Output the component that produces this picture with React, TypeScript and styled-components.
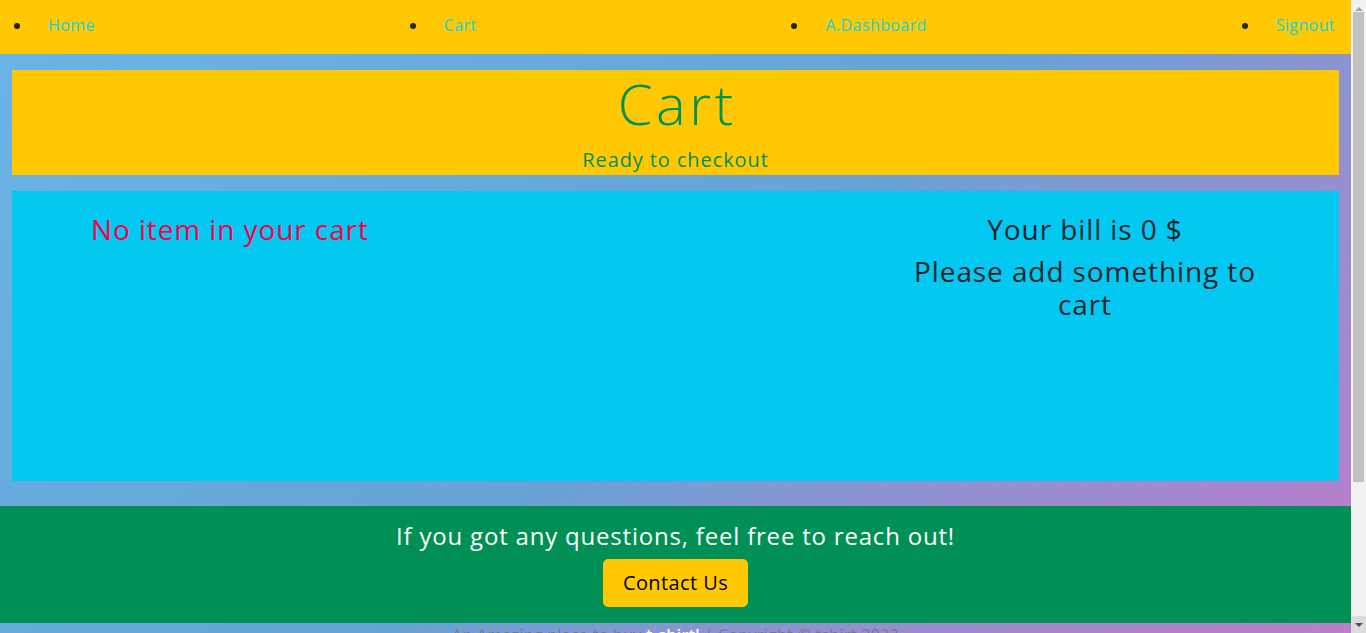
import React from "react";
import styled, { createGlobalStyle } from "styled-components";

const Global = createGlobalStyle`
  html, body { margin: 0; padding: 0; }
  body {
    font-family: "Open Sans", "Noto Sans", sans-serif;
    color: #212529;
    padding-right: 15px;
  }
  * { box-sizing: border-box; }
`;

const Page = styled.div`
  min-height: 800px;
  display: flex;
  flex-direction: column;
  background: linear-gradient(
    138deg,
    #6cb4e8 0%,
    #66aadc 30%,
    #67a3d6 48%,
    #8597d2 60%,
    #9a8ccf 72%,
    #b381cc 84%,
    #c779c8 100%
  );
`;

/* imitation of the browser's vertical scrollbar seen in the screenshot */
const ScrollTrack = styled.div`
  position: fixed;
  top: 0;
  right: 0;
  width: 15px;
  height: 100vh;
  background: #f1f1f1;
  display: flex;
  flex-direction: column;
  align-items: center;
`;

const ScrollArrow = styled.div<{ $down?: boolean }>`
  width: 15px;
  height: 17px;
  flex: none;
  display: flex;
  align-items: center;
  justify-content: center;
  background: ${(p) => (p.$down ? "#dcdcdc" : "#f1f1f1")};
  &::before {
    content: "";
    border-left: 4px solid transparent;
    border-right: 4px solid transparent;
    ${(p) =>
      p.$down
        ? "border-top: 4px solid #505050;"
        : "border-bottom: 4px solid #a3a3a3;"}
  }
`;

const ScrollThumb = styled.div`
  width: 11px;
  height: 470px;
  flex: none;
  background: #c1c1c1;
  margin-top: -5px;
`;

const ScrollSpacer = styled.div`
  flex: 1;
`;

const NavList = styled.ul`
  display: flex;
  justify-content: space-between;
  align-items: center;
  height: 54px;
  margin: 0;
  padding: 0 0 4px 32px;
  background: #ffc800;
  list-style: disc outside;
`;

const NavItem = styled.li`
  color: #212529;
  font-size: 16px;
`;

const NavLink = styled.a`
  display: block;
  padding: 8px 16px;
  font-size: 16px;
  line-height: 24px;
  color: #14d3e2;
  text-decoration: none;
  letter-spacing: 0.4px;
`;

const Main = styled.main`
  display: flex;
  flex-direction: column;
  gap: 16px;
  padding: 16px 12px 25px;
`;

const Hero = styled.section`
  height: 105px;
  background: #ffc800;
  text-align: center;
  color: #009157;
`;

const HeroTitle = styled.h1`
  margin: 0 0 8px;
  font-size: 56px;
  font-weight: 300;
  line-height: 1.2;
  letter-spacing: 3.5px;
  text-indent: 3.5px;
`;

const HeroLead = styled.p`
  margin: 0;
  font-size: 20px;
  line-height: 1.5;
  letter-spacing: 0.9px;
`;

const CartPanel = styled.section`
  display: grid;
  grid-template-columns: 1fr 380px;
  align-items: start;
  height: 290px;
  padding: 22px 64px 0 79px;
  background: #02c8f2;
`;

const Column = styled.div<{ $center?: boolean }>`
  text-align: ${(p) => (p.$center ? "center" : "left")};
`;

const Heading = styled.h3<{ $tone?: "danger" | "dark" }>`
  margin: 0 0 8px;
  font-size: 28px;
  font-weight: 400;
  line-height: 1.2;
  letter-spacing: 0.9px;
  color: ${(p) => (p.$tone === "danger" ? "#f7004a" : "#212529")};
`;

const Footer = styled.footer`
  display: flex;
  flex-direction: column;
  align-items: center;
`;

const ContactBand = styled.div`
  width: 100%;
  padding: 16px 0 16px;
  background: #009055;
  display: flex;
  flex-direction: column;
  align-items: center;
`;

const ContactText = styled.h4`
  margin: 0 0 8px;
  font-size: 24px;
  font-weight: 400;
  line-height: 1.2;
  color: #ffffff;
  letter-spacing: 0.8px;
`;

const ContactButton = styled.button`
  width: 145px;
  height: 48px;
  padding: 8px 16px;
  border: 1px solid #ffc800;
  border-radius: 5px;
  background: #ffc800;
  color: #000;
  font-family: inherit;
  font-size: 20px;
  line-height: 1.5;
  letter-spacing: 0.4px;
  cursor: pointer;
`;

const Copyright = styled.p`
  margin: 0;
  padding-top: 2px;
  font-size: 16px;
  line-height: 20px;
  color: #6f7d8c;
  text-align: center;
  letter-spacing: 0.3px;
`;

const Accent = styled.span`
  color: #ffffff;
  font-weight: 600;
`;

export default function App() {
  const links = ["Home", "Cart", "A.Dashboard", "Signout"];
  return (
    <>
      <Global />
      <Page>
        <nav>
          <NavList>
            {links.map((l) => (
              <NavItem key={l}>
                <NavLink href="#">{l}</NavLink>
              </NavItem>
            ))}
          </NavList>
        </nav>
        <Main>
          <Hero>
            <HeroTitle>Cart</HeroTitle>
            <HeroLead>Ready to checkout</HeroLead>
          </Hero>
          <CartPanel>
            <Column>
              <Heading $tone="danger">No item in your cart</Heading>
            </Column>
            <Column $center>
              <Heading>Your bill is 0 $</Heading>
              <Heading>Please add something to cart</Heading>
            </Column>
          </CartPanel>
        </Main>
        <Footer>
          <ContactBand>
            <ContactText>If you got any questions, feel free to reach out!</ContactText>
            <ContactButton>Contact Us</ContactButton>
          </ContactBand>
          <Copyright>
            An Amazing place to buy <Accent>t-shirt!</Accent> | Copyright © tshirt 2022
          </Copyright>
        </Footer>
      </Page>
      <ScrollTrack aria-hidden>
        <ScrollArrow />
        <ScrollThumb />
        <ScrollSpacer />
        <ScrollArrow $down />
      </ScrollTrack>
    </>
  );
}
